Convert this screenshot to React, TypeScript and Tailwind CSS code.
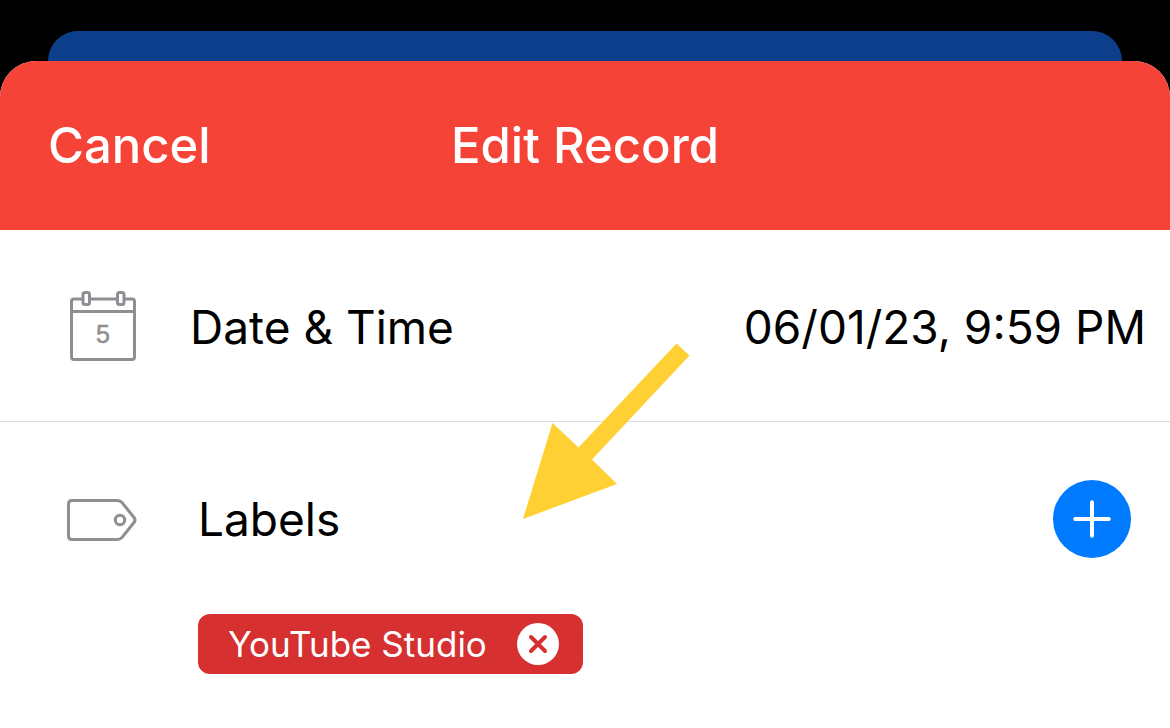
// src/App.tsx
import React, { useState } from 'react';

interface Label {
  id: number;
  name: string;
}

const initialLabels: Label[] = [{ id: 1, name: 'YouTube Studio' }];

const CalendarIcon: React.FC = () => (
  <svg width="72" height="72" viewBox="0 0 72 72" fill="none" stroke="#8e8e93" strokeWidth="3" aria-hidden="true">
    <path d="M16 8H8q-2.500 0-2.500 2.500V66q0 2.500 2.500 2.500H66q2.500 0 2.500-2.500V10.500Q68.500 8 66 8H58M24 8H50" />
    <path d="M5.500 20.500H68.500" />
    <rect x="17" y="1.500" width="6.500" height="12" rx="2" />
    <rect x="51.500" y="1.500" width="6.500" height="12" rx="2" />
    <text
      x="37"
      y="52"
      textAnchor="middle"
      stroke="#8e8e93"
      strokeWidth="0.500"
      fill="#8e8e93"
      className="font-['Liberation_Sans',sans-serif] text-[25px]"
    >
      5
    </text>
  </svg>
);

const TagIcon: React.FC = () => (
  <svg width="72" height="46" viewBox="0 0 72 46" fill="none" stroke="#8e8e93" strokeWidth="3" aria-hidden="true">
    <path d="M6 4.500H51q3 0 5 2L68 21.500q2 2.500 0 5L56 41.500q-2 2-5 2H6q-3.500 0-3.500-3.500V8q0-3.500 3.500-3.500Z" />
    <circle cx="54" cy="24" r="4.700" />
  </svg>
);

const App: React.FC = () => {
  const [labels, setLabels] = useState<Label[]>(initialLabels);

  const removeLabel = (id: number) => {
    setLabels(labels.filter(label => label.id !== id));
  };

  return (
    <div className="flex min-h-screen flex-col bg-black pt-[31px] font-['Inter',sans-serif] text-black">
      <div className="mx-12 h-[30px] rounded-t-[30px] bg-[#0c3e8c]" />

      <div className="flex grow flex-col overflow-hidden rounded-t-[36px] bg-white">
        <header className="grid grid-cols-3 items-center bg-[#f54337] px-12 py-[54px] text-[49px] leading-[61px] font-medium text-white">
          <button type="button" className="justify-self-start">
            Cancel
          </button>
          <h1 className="text-center whitespace-nowrap">Edit Record</h1>
        </header>

        <main className="relative text-[46px] leading-[60px]">
          <div className="flex items-center gap-[52px] border-b border-[#dcdcde] pt-[61px] pr-6 pb-[58px] pl-[66px]">
            <CalendarIcon />
            <span id="date-label">Date &amp; Time</span>
            <button type="button" aria-describedby="date-label" className="ml-auto whitespace-nowrap">
              06/01/23, 9:59 PM
            </button>
          </div>

          <section className="pt-[58px] pr-[39px] pl-[66px]">
            <div className="flex items-center gap-[60px]">
              <TagIcon />
              <h2>Labels</h2>
              <button
                type="button"
                aria-label="Add label"
                className="ml-auto flex size-[78px] items-center justify-center rounded-full bg-[#007aff]"
              >
                <svg width="38" height="38" viewBox="0 0 38 38" stroke="white" strokeWidth="4" strokeLinecap="round">
                  <path d="M19 2.200V35.800M2.200 19H35.800" />
                </svg>
              </button>
            </div>

            <ul className="mt-14 flex flex-wrap gap-4 pl-[132px]">
              {labels.map(label => (
                <li
                  key={label.id}
                  className="flex items-center gap-[30px] rounded-xl bg-[#d63030] pr-6 pl-[30px] text-[35px] text-white"
                >
                  <span>{label.name}</span>
                  <button
                    type="button"
                    aria-label={`Remove ${label.name}`}
                    onClick={() => removeLabel(label.id)}
                    className="flex size-[42px] items-center justify-center rounded-full bg-white"
                  >
                    <svg width="20" height="20" viewBox="0 0 20 20" stroke="#d63030" strokeWidth="4" strokeLinecap="round">
                      <path d="M3 3L17 17M17 3L3 17" />
                    </svg>
                  </button>
                </li>
              ))}
            </ul>
          </section>

          <svg
            className="pointer-events-none absolute top-[113px] left-[523px]"
            width="167"
            height="176"
            viewBox="0 0 167 176"
            fill="#ffd033"
            aria-hidden="true"
          >
            <path d="M153.500 0.500L166.500 12.500L69 116.500L94 141L0 176L29.500 80L55.500 104.500Z" />
          </svg>
        </main>
      </div>
    </div>
  );
};

export default App;
